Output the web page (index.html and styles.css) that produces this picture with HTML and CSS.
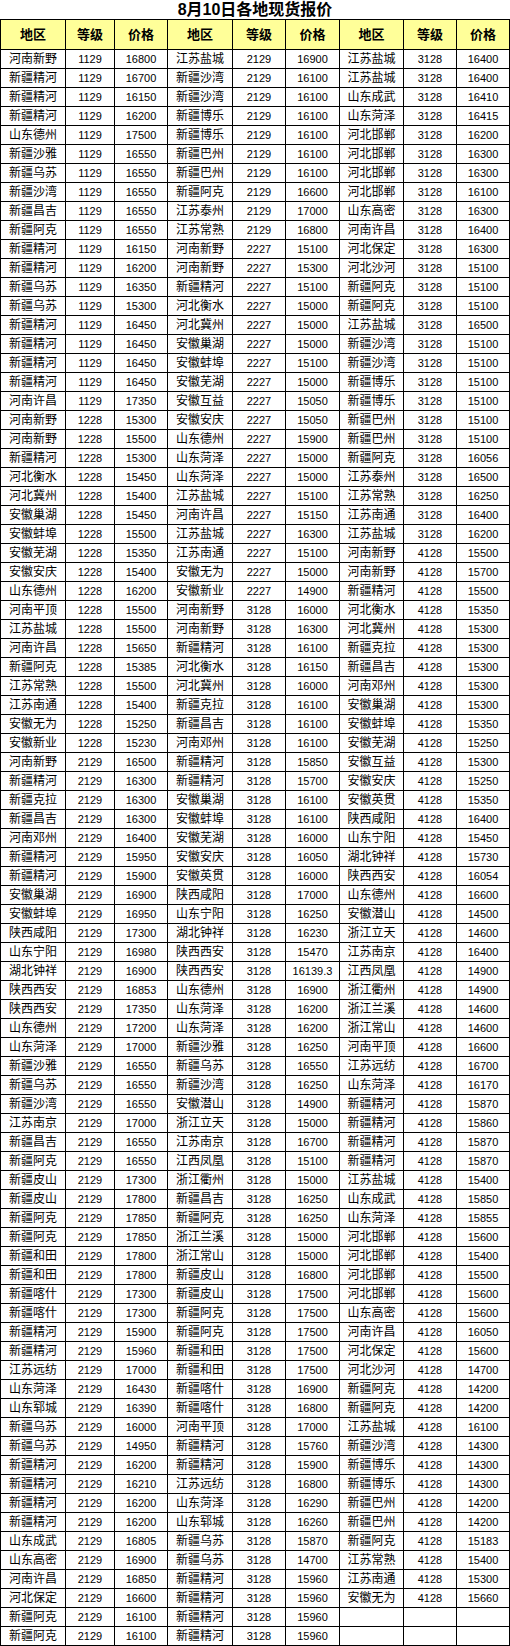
FILE: index.html
```html
<!DOCTYPE html>
<html lang="zh">
<head>
<meta charset="utf-8">
<title>8月10日各地现货报价</title>
<link rel="stylesheet" href="styles.css">
</head>
<body>
<div class="sheet">
  <div class="title">8月10日各地现货报价</div>
  <div class="grid">
    <div class="row head"><span>地区</span><span>等级</span><span>价格</span><span>地区</span><span>等级</span><span>价格</span><span>地区</span><span>等级</span><span>价格</span></div>
    <div class="row"><span>河南新野</span><span>1129</span><span>16800</span><span>江苏盐城</span><span>2129</span><span>16900</span><span>江苏盐城</span><span>3128</span><span>16400</span></div>
    <div class="row"><span>新疆精河</span><span>1129</span><span>16700</span><span>新疆沙湾</span><span>2129</span><span>16100</span><span>江苏盐城</span><span>3128</span><span>16400</span></div>
    <div class="row"><span>新疆精河</span><span>1129</span><span>16150</span><span>新疆沙湾</span><span>2129</span><span>16100</span><span>山东成武</span><span>3128</span><span>16410</span></div>
    <div class="row"><span>新疆精河</span><span>1129</span><span>16200</span><span>新疆博乐</span><span>2129</span><span>16100</span><span>山东菏泽</span><span>3128</span><span>16415</span></div>
    <div class="row"><span>山东德州</span><span>1129</span><span>17500</span><span>新疆博乐</span><span>2129</span><span>16100</span><span>河北邯郸</span><span>3128</span><span>16200</span></div>
    <div class="row"><span>新疆沙雅</span><span>1129</span><span>16550</span><span>新疆巴州</span><span>2129</span><span>16100</span><span>河北邯郸</span><span>3128</span><span>16300</span></div>
    <div class="row"><span>新疆乌苏</span><span>1129</span><span>16550</span><span>新疆巴州</span><span>2129</span><span>16100</span><span>河北邯郸</span><span>3128</span><span>16300</span></div>
    <div class="row"><span>新疆沙湾</span><span>1129</span><span>16550</span><span>新疆阿克</span><span>2129</span><span>16600</span><span>河北邯郸</span><span>3128</span><span>16100</span></div>
    <div class="row"><span>新疆昌吉</span><span>1129</span><span>16550</span><span>江苏泰州</span><span>2129</span><span>17000</span><span>山东高密</span><span>3128</span><span>16300</span></div>
    <div class="row"><span>新疆阿克</span><span>1129</span><span>16550</span><span>江苏常熟</span><span>2129</span><span>16800</span><span>河南许昌</span><span>3128</span><span>16400</span></div>
    <div class="row"><span>新疆精河</span><span>1129</span><span>16150</span><span>河南新野</span><span>2227</span><span>15100</span><span>河北保定</span><span>3128</span><span>16300</span></div>
    <div class="row"><span>新疆精河</span><span>1129</span><span>16200</span><span>河南新野</span><span>2227</span><span>15300</span><span>河北沙河</span><span>3128</span><span>15100</span></div>
    <div class="row"><span>新疆乌苏</span><span>1129</span><span>16350</span><span>新疆精河</span><span>2227</span><span>15100</span><span>新疆阿克</span><span>3128</span><span>15100</span></div>
    <div class="row"><span>新疆乌苏</span><span>1129</span><span>15300</span><span>河北衡水</span><span>2227</span><span>15000</span><span>新疆阿克</span><span>3128</span><span>15100</span></div>
    <div class="row"><span>新疆精河</span><span>1129</span><span>16450</span><span>河北冀州</span><span>2227</span><span>15000</span><span>江苏盐城</span><span>3128</span><span>16500</span></div>
    <div class="row"><span>新疆精河</span><span>1129</span><span>16450</span><span>安徽巢湖</span><span>2227</span><span>15000</span><span>新疆沙湾</span><span>3128</span><span>15100</span></div>
    <div class="row"><span>新疆精河</span><span>1129</span><span>16450</span><span>安徽蚌埠</span><span>2227</span><span>15100</span><span>新疆沙湾</span><span>3128</span><span>15100</span></div>
    <div class="row"><span>新疆精河</span><span>1129</span><span>16450</span><span>安徽芜湖</span><span>2227</span><span>15000</span><span>新疆博乐</span><span>3128</span><span>15100</span></div>
    <div class="row"><span>河南许昌</span><span>1129</span><span>17350</span><span>安徽互益</span><span>2227</span><span>15050</span><span>新疆博乐</span><span>3128</span><span>15100</span></div>
    <div class="row"><span>河南新野</span><span>1228</span><span>15300</span><span>安徽安庆</span><span>2227</span><span>15050</span><span>新疆巴州</span><span>3128</span><span>15100</span></div>
    <div class="row"><span>河南新野</span><span>1228</span><span>15500</span><span>山东德州</span><span>2227</span><span>15900</span><span>新疆巴州</span><span>3128</span><span>15100</span></div>
    <div class="row"><span>新疆精河</span><span>1228</span><span>15300</span><span>山东菏泽</span><span>2227</span><span>15000</span><span>新疆阿克</span><span>3128</span><span>16056</span></div>
    <div class="row"><span>河北衡水</span><span>1228</span><span>15450</span><span>山东菏泽</span><span>2227</span><span>15000</span><span>江苏泰州</span><span>3128</span><span>16500</span></div>
    <div class="row"><span>河北冀州</span><span>1228</span><span>15400</span><span>江苏盐城</span><span>2227</span><span>15100</span><span>江苏常熟</span><span>3128</span><span>16250</span></div>
    <div class="row"><span>安徽巢湖</span><span>1228</span><span>15450</span><span>河南许昌</span><span>2227</span><span>15150</span><span>江苏南通</span><span>3128</span><span>16400</span></div>
    <div class="row"><span>安徽蚌埠</span><span>1228</span><span>15500</span><span>江苏盐城</span><span>2227</span><span>16300</span><span>江苏盐城</span><span>3128</span><span>16200</span></div>
    <div class="row"><span>安徽芜湖</span><span>1228</span><span>15350</span><span>江苏南通</span><span>2227</span><span>15100</span><span>河南新野</span><span>4128</span><span>15500</span></div>
    <div class="row"><span>安徽安庆</span><span>1228</span><span>15400</span><span>安徽无为</span><span>2227</span><span>15000</span><span>河南新野</span><span>4128</span><span>15700</span></div>
    <div class="row"><span>山东德州</span><span>1228</span><span>16200</span><span>安徽新业</span><span>2227</span><span>14900</span><span>新疆精河</span><span>4128</span><span>15500</span></div>
    <div class="row"><span>河南平顶</span><span>1228</span><span>15500</span><span>河南新野</span><span>3128</span><span>16000</span><span>河北衡水</span><span>4128</span><span>15350</span></div>
    <div class="row"><span>江苏盐城</span><span>1228</span><span>15500</span><span>河南新野</span><span>3128</span><span>16300</span><span>河北冀州</span><span>4128</span><span>15300</span></div>
    <div class="row"><span>河南许昌</span><span>1228</span><span>15650</span><span>新疆精河</span><span>3128</span><span>16100</span><span>新疆克拉</span><span>4128</span><span>15300</span></div>
    <div class="row"><span>新疆阿克</span><span>1228</span><span>15385</span><span>河北衡水</span><span>3128</span><span>16150</span><span>新疆昌吉</span><span>4128</span><span>15300</span></div>
    <div class="row"><span>江苏常熟</span><span>1228</span><span>15500</span><span>河北冀州</span><span>3128</span><span>16000</span><span>河南邓州</span><span>4128</span><span>15300</span></div>
    <div class="row"><span>江苏南通</span><span>1228</span><span>15400</span><span>新疆克拉</span><span>3128</span><span>16100</span><span>安徽巢湖</span><span>4128</span><span>15300</span></div>
    <div class="row"><span>安徽无为</span><span>1228</span><span>15250</span><span>新疆昌吉</span><span>3128</span><span>16100</span><span>安徽蚌埠</span><span>4128</span><span>15350</span></div>
    <div class="row"><span>安徽新业</span><span>1228</span><span>15230</span><span>河南邓州</span><span>3128</span><span>16100</span><span>安徽芜湖</span><span>4128</span><span>15250</span></div>
    <div class="row"><span>河南新野</span><span>2129</span><span>16500</span><span>新疆精河</span><span>3128</span><span>15850</span><span>安徽互益</span><span>4128</span><span>15300</span></div>
    <div class="row"><span>新疆精河</span><span>2129</span><span>16300</span><span>新疆精河</span><span>3128</span><span>15700</span><span>安徽安庆</span><span>4128</span><span>15250</span></div>
    <div class="row"><span>新疆克拉</span><span>2129</span><span>16300</span><span>安徽巢湖</span><span>3128</span><span>16100</span><span>安徽英贯</span><span>4128</span><span>15350</span></div>
    <div class="row"><span>新疆昌吉</span><span>2129</span><span>16300</span><span>安徽蚌埠</span><span>3128</span><span>16100</span><span>陕西咸阳</span><span>4128</span><span>16400</span></div>
    <div class="row"><span>河南邓州</span><span>2129</span><span>16400</span><span>安徽芜湖</span><span>3128</span><span>16000</span><span>山东宁阳</span><span>4128</span><span>15450</span></div>
    <div class="row"><span>新疆精河</span><span>2129</span><span>15950</span><span>安徽安庆</span><span>3128</span><span>16050</span><span>湖北钟祥</span><span>4128</span><span>15730</span></div>
    <div class="row"><span>新疆精河</span><span>2129</span><span>15900</span><span>安徽英贯</span><span>3128</span><span>16000</span><span>陕西西安</span><span>4128</span><span>16054</span></div>
    <div class="row"><span>安徽巢湖</span><span>2129</span><span>16900</span><span>陕西咸阳</span><span>3128</span><span>17000</span><span>山东德州</span><span>4128</span><span>16600</span></div>
    <div class="row"><span>安徽蚌埠</span><span>2129</span><span>16950</span><span>山东宁阳</span><span>3128</span><span>16250</span><span>安徽潜山</span><span>4128</span><span>14500</span></div>
    <div class="row"><span>陕西咸阳</span><span>2129</span><span>17300</span><span>湖北钟祥</span><span>3128</span><span>16230</span><span>浙江立天</span><span>4128</span><span>14600</span></div>
    <div class="row"><span>山东宁阳</span><span>2129</span><span>16980</span><span>陕西西安</span><span>3128</span><span>15470</span><span>江苏南京</span><span>4128</span><span>16400</span></div>
    <div class="row"><span>湖北钟祥</span><span>2129</span><span>16900</span><span>陕西西安</span><span>3128</span><span>16139.3</span><span>江西凤凰</span><span>4128</span><span>14900</span></div>
    <div class="row"><span>陕西西安</span><span>2129</span><span>16853</span><span>山东德州</span><span>3128</span><span>16900</span><span>浙江衢州</span><span>4128</span><span>14900</span></div>
    <div class="row"><span>陕西西安</span><span>2129</span><span>17350</span><span>山东菏泽</span><span>3128</span><span>16200</span><span>浙江兰溪</span><span>4128</span><span>14600</span></div>
    <div class="row"><span>山东德州</span><span>2129</span><span>17200</span><span>山东菏泽</span><span>3128</span><span>16200</span><span>浙江常山</span><span>4128</span><span>14600</span></div>
    <div class="row"><span>山东菏泽</span><span>2129</span><span>17000</span><span>新疆沙雅</span><span>3128</span><span>16250</span><span>河南平顶</span><span>4128</span><span>16600</span></div>
    <div class="row"><span>新疆沙雅</span><span>2129</span><span>16550</span><span>新疆乌苏</span><span>3128</span><span>16550</span><span>江苏远纺</span><span>4128</span><span>16700</span></div>
    <div class="row"><span>新疆乌苏</span><span>2129</span><span>16550</span><span>新疆沙湾</span><span>3128</span><span>16250</span><span>山东菏泽</span><span>4128</span><span>16170</span></div>
    <div class="row"><span>新疆沙湾</span><span>2129</span><span>16550</span><span>安徽潜山</span><span>3128</span><span>14900</span><span>新疆精河</span><span>4128</span><span>15870</span></div>
    <div class="row"><span>江苏南京</span><span>2129</span><span>17000</span><span>浙江立天</span><span>3128</span><span>15000</span><span>新疆精河</span><span>4128</span><span>15860</span></div>
    <div class="row"><span>新疆昌吉</span><span>2129</span><span>16550</span><span>江苏南京</span><span>3128</span><span>16700</span><span>新疆精河</span><span>4128</span><span>15870</span></div>
    <div class="row"><span>新疆阿克</span><span>2129</span><span>16550</span><span>江西凤凰</span><span>3128</span><span>15100</span><span>新疆精河</span><span>4128</span><span>15870</span></div>
    <div class="row"><span>新疆皮山</span><span>2129</span><span>17300</span><span>浙江衢州</span><span>3128</span><span>15000</span><span>江苏盐城</span><span>4128</span><span>15400</span></div>
    <div class="row"><span>新疆皮山</span><span>2129</span><span>17800</span><span>新疆昌吉</span><span>3128</span><span>16250</span><span>山东成武</span><span>4128</span><span>15850</span></div>
    <div class="row"><span>新疆阿克</span><span>2129</span><span>17850</span><span>新疆阿克</span><span>3128</span><span>16250</span><span>山东菏泽</span><span>4128</span><span>15855</span></div>
    <div class="row"><span>新疆阿克</span><span>2129</span><span>17850</span><span>浙江兰溪</span><span>3128</span><span>15000</span><span>河北邯郸</span><span>4128</span><span>15600</span></div>
    <div class="row"><span>新疆和田</span><span>2129</span><span>17800</span><span>浙江常山</span><span>3128</span><span>15000</span><span>河北邯郸</span><span>4128</span><span>15400</span></div>
    <div class="row"><span>新疆和田</span><span>2129</span><span>17800</span><span>新疆皮山</span><span>3128</span><span>16800</span><span>河北邯郸</span><span>4128</span><span>15500</span></div>
    <div class="row"><span>新疆喀什</span><span>2129</span><span>17300</span><span>新疆皮山</span><span>3128</span><span>17500</span><span>河北邯郸</span><span>4128</span><span>15600</span></div>
    <div class="row"><span>新疆喀什</span><span>2129</span><span>17300</span><span>新疆阿克</span><span>3128</span><span>17500</span><span>山东高密</span><span>4128</span><span>15600</span></div>
    <div class="row"><span>新疆精河</span><span>2129</span><span>15900</span><span>新疆阿克</span><span>3128</span><span>17500</span><span>河南许昌</span><span>4128</span><span>16050</span></div>
    <div class="row"><span>新疆精河</span><span>2129</span><span>15960</span><span>新疆和田</span><span>3128</span><span>17500</span><span>河北保定</span><span>4128</span><span>15600</span></div>
    <div class="row"><span>江苏远纺</span><span>2129</span><span>17000</span><span>新疆和田</span><span>3128</span><span>17500</span><span>河北沙河</span><span>4128</span><span>14700</span></div>
    <div class="row"><span>山东菏泽</span><span>2129</span><span>16430</span><span>新疆喀什</span><span>3128</span><span>16900</span><span>新疆阿克</span><span>4128</span><span>14200</span></div>
    <div class="row"><span>山东郓城</span><span>2129</span><span>16390</span><span>新疆喀什</span><span>3128</span><span>16800</span><span>新疆阿克</span><span>4128</span><span>14200</span></div>
    <div class="row"><span>新疆乌苏</span><span>2129</span><span>16000</span><span>河南平顶</span><span>3128</span><span>17000</span><span>江苏盐城</span><span>4128</span><span>16100</span></div>
    <div class="row"><span>新疆乌苏</span><span>2129</span><span>14950</span><span>新疆精河</span><span>3128</span><span>15760</span><span>新疆沙湾</span><span>4128</span><span>14300</span></div>
    <div class="row"><span>新疆精河</span><span>2129</span><span>16200</span><span>新疆精河</span><span>3128</span><span>15900</span><span>新疆博乐</span><span>4128</span><span>14300</span></div>
    <div class="row"><span>新疆精河</span><span>2129</span><span>16210</span><span>江苏远纺</span><span>3128</span><span>16800</span><span>新疆博乐</span><span>4128</span><span>14300</span></div>
    <div class="row"><span>新疆精河</span><span>2129</span><span>16200</span><span>山东菏泽</span><span>3128</span><span>16290</span><span>新疆巴州</span><span>4128</span><span>14200</span></div>
    <div class="row"><span>新疆精河</span><span>2129</span><span>16200</span><span>山东郓城</span><span>3128</span><span>16260</span><span>新疆巴州</span><span>4128</span><span>14200</span></div>
    <div class="row"><span>山东成武</span><span>2129</span><span>16805</span><span>新疆乌苏</span><span>3128</span><span>15870</span><span>新疆阿克</span><span>4128</span><span>15183</span></div>
    <div class="row"><span>山东高密</span><span>2129</span><span>16900</span><span>新疆乌苏</span><span>3128</span><span>14700</span><span>江苏常熟</span><span>4128</span><span>15400</span></div>
    <div class="row"><span>河南许昌</span><span>2129</span><span>16850</span><span>新疆精河</span><span>3128</span><span>15960</span><span>江苏南通</span><span>4128</span><span>15300</span></div>
    <div class="row"><span>河北保定</span><span>2129</span><span>16600</span><span>新疆精河</span><span>3128</span><span>15960</span><span>安徽无为</span><span>4128</span><span>15660</span></div>
    <div class="row"><span>新疆阿克</span><span>2129</span><span>16100</span><span>新疆精河</span><span>3128</span><span>15960</span><span></span><span></span><span></span></div>
    <div class="row"><span>新疆阿克</span><span>2129</span><span>16100</span><span>新疆精河</span><span>3128</span><span>15960</span><span></span><span></span><span></span></div>
  </div>
</div>
</body>
</html>
```

FILE: styles.css
```css
html, body {
  margin: 0;
  padding: 0;
  background: #ffffff;
}

.sheet {
  width: 510px;
  font-family: "Liberation Sans", "Noto Sans CJK SC", sans-serif;
  color: #000000;
}

.title {
  height: 19px;
  line-height: 19px;
  text-align: center;
  font-size: 16px;
  font-weight: bold;
}

.grid {
  display: grid;
  grid-template-columns: 64px 48px 52px 64px 52px 53px 63px 52px 52px;
  grid-template-rows: 29px;
  grid-auto-rows: 18px;
  gap: 1px;
  padding: 1px;
  background: #000000;
  width: 510px;
  box-sizing: border-box;
}

.row {
  display: contents;
}

.row > span {
  background: #ffffff;
  display: flex;
  align-items: center;
  justify-content: center;
  font-size: 11px;
  line-height: 1;
  white-space: nowrap;
}

.row > span:nth-child(3n+1) {
  font-size: 12px;
}

.head > span,
.head > span:nth-child(3n+1) {
  background: #ffff99;
  font-weight: bold;
  font-size: 13px;
}
```
